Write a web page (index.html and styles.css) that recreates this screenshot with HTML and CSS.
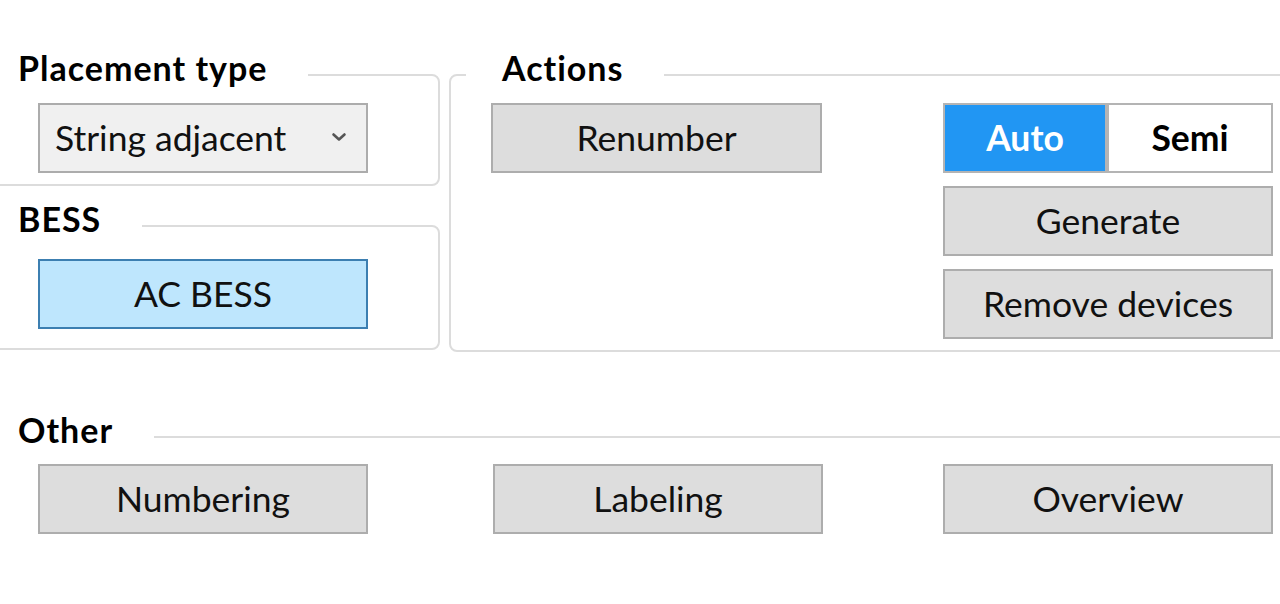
FILE: index.html
```html
<!DOCTYPE html>
<html lang="en">
<head>
<meta charset="utf-8">
<title>Placement</title>
<link rel="stylesheet" href="styles.css">
</head>
<body>
<div class="page">
  <div class="top">
    <div class="leftcol">
      <fieldset class="group g-place">
        <legend>Placement type</legend>
        <div class="content">
          <div class="combo" role="combobox" aria-expanded="false">
            <span class="combo-text">String adjacent</span>
            <svg class="chev" width="16" height="10" viewBox="0 0 16 10"><path d="M2.5 2.5 L8 7.5 L13.5 2.5" fill="none" stroke="#555555" stroke-width="2.6" stroke-linecap="round" stroke-linejoin="round"/></svg>
          </div>
        </div>
      </fieldset>
      <fieldset class="group g-bess">
        <legend>BESS</legend>
        <div class="content">
          <button class="btn btn-hover">AC BESS</button>
        </div>
      </fieldset>
    </div>
    <fieldset class="group g-actions">
      <legend>Actions</legend>
      <div class="content actions-grid">
        <button class="btn btn-wide">Renumber</button>
        <div class="stack">
          <div class="toggle">
            <button class="seg seg-on">Auto</button>
            <button class="seg">Semi</button>
          </div>
          <button class="btn">Generate</button>
          <button class="btn">Remove devices</button>
        </div>
      </div>
    </fieldset>
  </div>
  <fieldset class="group g-other">
    <legend>Other</legend>
    <div class="content other-grid">
      <button class="btn">Numbering</button>
      <button class="btn">Labeling</button>
      <button class="btn">Overview</button>
    </div>
  </fieldset>
</div>
</body>
</html>
```
FILE: styles.css
```css
html, body {
  margin: 0;
  padding: 0;
  overflow: hidden;
  background: #ffffff;
}
body {
  width: 1280px;
  height: 604px;
  font-family: Lato, "Liberation Sans", sans-serif;
  color: #000;
}
.page {
  padding-top: 48px;
}
.top {
  display: flex;
  align-items: flex-start;
  gap: 9px;
  margin-left: -35px;
  width: 1335px;
}
.leftcol {
  width: 475px;
  flex: none;
  display: flex;
  flex-direction: column;
  gap: 13px;
}
.group {
  margin: 0;
  padding: 0;
  min-width: 0;
  border: 2px solid #dcdcdc;
  border-radius: 8px;
  box-sizing: border-box;
}
.group legend {
  margin-left: 15px;
  padding: 0 41px 14px 36px;
  font-weight: 700;
  font-size: 34px;
  line-height: 40px;
  letter-spacing: 1px;
  color: #000;
}
.g-place .content {
  padding: 1px 0 11px 71px;
}
.g-bess .content {
  padding: 6px 0 19px 71px;
}
.g-actions {
  width: 851px;
  flex: none;
}
.g-actions .content {
  padding: 1px 0 11px 40px;
}
.actions-grid {
  display: grid;
  grid-template-columns: 452px 330px;
  align-items: start;
}
.stack {
  display: flex;
  flex-direction: column;
  gap: 13px;
}
.g-other {
  margin-top: 58px;
  margin-left: -35px;
  width: 1335px;
}
.g-other .content {
  padding: 0 0 90px 71px;
}
.other-grid {
  display: grid;
  grid-template-columns: 455px 450px 330px;
}
.btn, .combo, .seg {
  box-sizing: border-box;
  height: 70px;
  margin: 0;
  font-family: Lato, "Liberation Sans", sans-serif;
  font-size: 35.5px;
  line-height: 1;
  color: #111;
  display: flex;
  align-items: center;
}
.btn {
  width: 330px;
  justify-content: center;
  padding: 0;
  border: 2px solid #adadad;
  background: #dddddd;
}
.btn-wide {
  width: 331px;
}
.btn-hover {
  background: #bee6fd;
  border-color: #3c7fb1;
}
.combo {
  width: 330px;
  padding: 0 19px 0 15px;
  border: 2px solid #acacac;
  background: #f0f0f0;
  justify-content: space-between;
}
.chev {
  display: block;
  margin-top: -3px;
}
.toggle {
  display: flex;
  width: 330px;
}
.seg {
  flex: none;
  justify-content: center;
  padding: 0;
  font-weight: 700;
  border: 2px solid #b4b4b4;
  background: #ffffff;
  color: #000;
  width: 166px;
}
.seg-on {
  width: 164px;
  background: #2196f3;
  color: #ffffff;
}
```
